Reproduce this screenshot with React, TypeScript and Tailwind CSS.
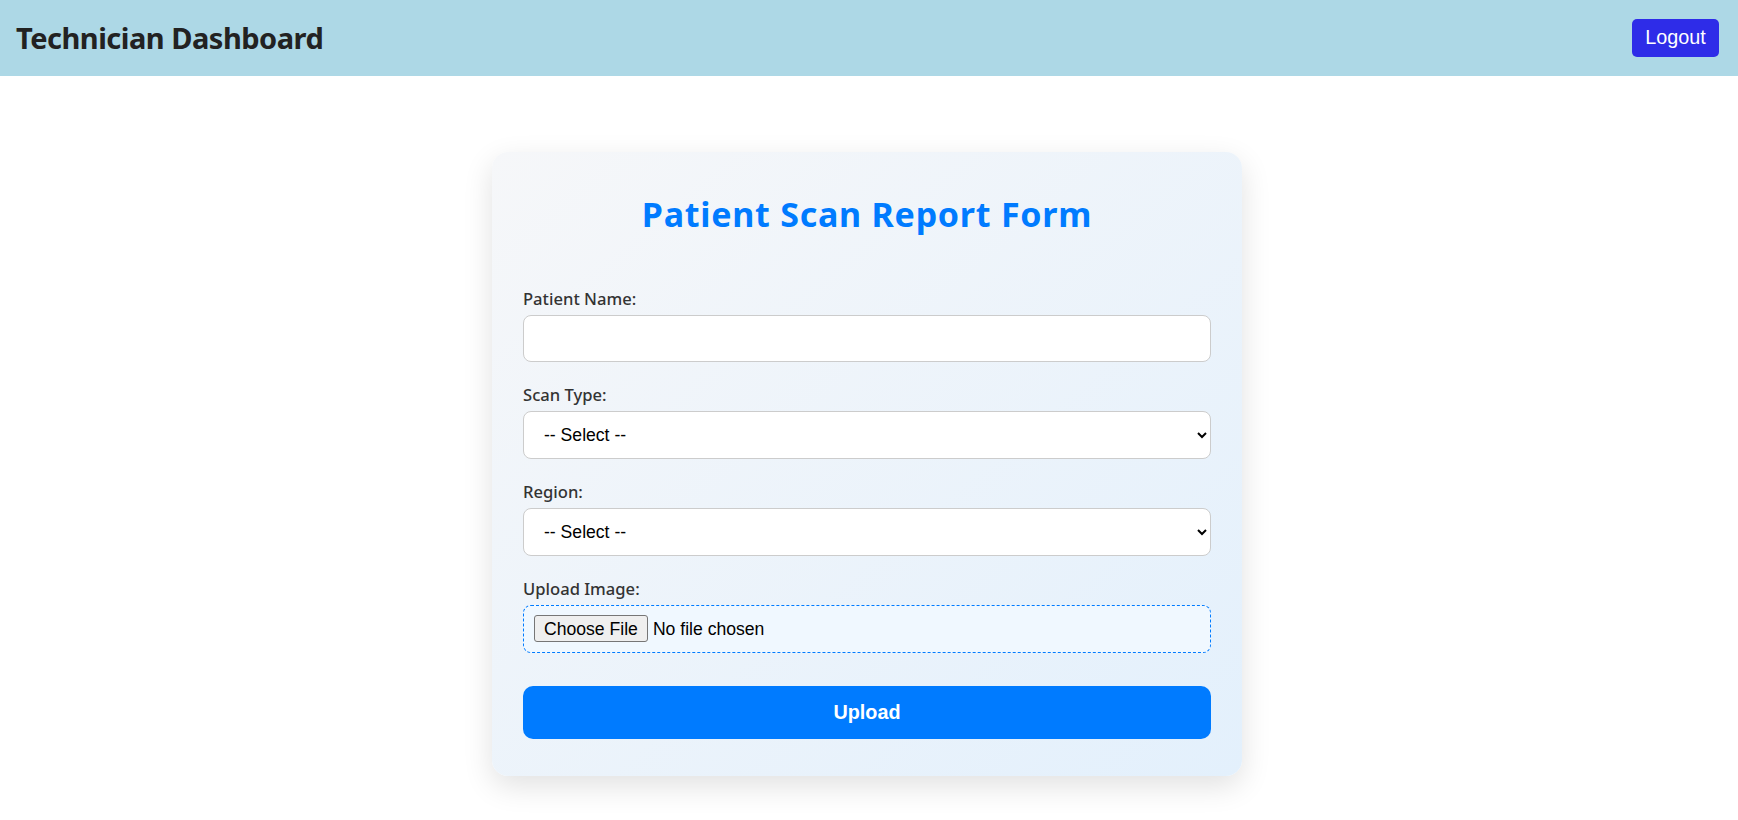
export default function App() {
  const labelCls =
    "block h-[22px] leading-[22px] text-[16.6px] font-medium text-[#333] mb-[5px] font-['Noto_Sans',sans-serif]";
  return (
    <div className="min-h-screen bg-white">
      <header className="h-[76px] bg-[#add8e6] flex items-center justify-between pl-[16px] pr-[19px]">
        <h1 className="text-[29px] leading-[40px] font-bold tracking-[-0.5px] text-[#222] font-['Noto_Sans',sans-serif]">
          Technician Dashboard
        </h1>
        <button className="h-[38px] w-[87px] rounded-[5px] bg-[#2e2ce8] text-white text-[19.8px] font-['Liberation_Sans',Arial,sans-serif]">
          Logout
        </button>
      </header>
      <main className="flex justify-center pt-[76px] pb-[40px]">
        <div className="mr-[4px] w-[750px] rounded-[16px] bg-linear-to-br from-[#f6f7f9] to-[#e3f0fc] shadow-[0_10px_30px_rgba(0,0,0,0.12)] px-[31px] pt-[40px] pb-[37px]">
          <h2 className="h-[44px] leading-[44px] text-center text-[34px] font-bold text-[#007bff] tracking-[0.75px] mb-[52px] font-['Noto_Sans',sans-serif]">
            Patient Scan Report Form
          </h2>
          <form className="flex flex-col" onSubmit={(e) => e.preventDefault()}>
            <label className={labelCls}>Patient Name:</label>
            <input
              type="text"
              className="h-[47px] w-full rounded-[8px] border border-[#ccc] bg-white px-[13px] text-[17.6px] mb-[22px] font-['Liberation_Sans',Arial,sans-serif] outline-none"
            />
            <label className={labelCls}>Scan Type:</label>
            <select className="h-[48px] w-full rounded-[8px] border border-[#ccc] bg-white pl-[16px] pr-[12px] text-[17.6px] text-black mb-[22px] font-['Liberation_Sans',Arial,sans-serif]">
              <option>-- Select --</option>
            </select>
            <label className={labelCls}>Region:</label>
            <select className="h-[48px] w-full rounded-[8px] border border-[#ccc] bg-white pl-[16px] pr-[12px] text-[17.6px] text-black mb-[22px] font-['Liberation_Sans',Arial,sans-serif]">
              <option>-- Select --</option>
            </select>
            <label className={labelCls}>Upload Image:</label>
            <div className="h-[48px] w-full rounded-[8px] border border-dashed border-[#007bff] bg-[#f0f8ff] px-[10px] flex items-center">
              <input
                type="file"
                className="text-[17.6px] text-black font-['Liberation_Sans',Arial,sans-serif] file:h-[27px] file:px-[9px] file:mr-[5px] file:border file:border-solid file:border-[#767676] file:rounded-[3px] file:bg-[#efefef] file:text-black"
              />
            </div>
            <button
              type="submit"
              className="mt-[33px] h-[53px] w-full rounded-[10px] bg-[#007bff] text-white text-[19.8px] font-bold font-['Liberation_Sans',Arial,sans-serif]"
            >
              Upload
            </button>
          </form>
        </div>
      </main>
    </div>
  );
}
